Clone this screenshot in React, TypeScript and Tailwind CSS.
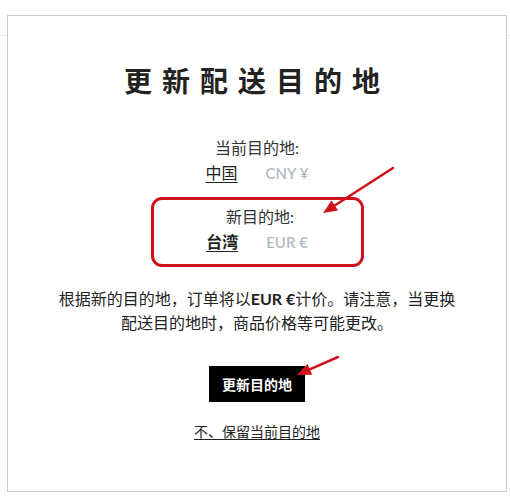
const cjk = "font-['Lato','Noto_Sans_CJK_SC',sans-serif]";

function Arrow({ x1, y1, x2, y2 }: { x1: number; y1: number; x2: number; y2: number }) {
  const a = Math.atan2(y2 - y1, x2 - x1);
  const len = 14;
  const w = 6;
  const bx = x2 - len * Math.cos(a);
  const by = y2 - len * Math.sin(a);
  const px = -Math.sin(a) * w;
  const py = Math.cos(a) * w;
  return (
    <g>
      <line x1={x1} y1={y1} x2={bx} y2={by} stroke="#d0111b" strokeWidth={2.5} strokeLinecap="round" />
      <polygon points={`${x2},${y2} ${bx + px},${by + py} ${bx - px},${by - py}`} fill="#d0111b" />
    </g>
  );
}

export default function App() {
  return (
    <div className={`relative h-[503px] w-[510px] overflow-hidden bg-white text-[#222] ${cjk}`}>
      <div className="absolute left-0 right-0 top-[35px] h-px bg-[#e6e6e6]" />
      <div className="relative ml-[7px] mt-[15px] flex h-[477px] w-[500px] flex-col items-center border border-[#cccccc] bg-white">
        <h1 className="mt-[47px] text-[28px] font-bold leading-[36px] tracking-[10px] text-[#222]">
          更新配送目的地
        </h1>

        <div className="mt-[38px] flex flex-col items-center text-[16px] leading-[22px]">
          <div className="text-[#333]">当前目的地:</div>
          <div className="mt-[3px] flex items-baseline gap-[28px]">
            <span className="text-[#222] underline underline-offset-[3px]">中国</span>
            <span className="text-[15px] font-medium text-[#aeb6bf]">CNY ¥</span>
          </div>
        </div>

        <div className="mt-[13px] flex h-[70px] w-[213px] flex-col items-center rounded-[11px] border-[3px] border-[#d0111b] pt-[6px] text-[16px] leading-[22px]">
          <div className="ml-[6px] text-[#333]">新目的地:</div>
          <div className="mt-[3px] flex items-baseline gap-[28px]">
            <span className="font-bold text-[#222] underline underline-offset-[3px]">台湾</span>
            <span className="text-[15px] font-medium text-[#aeb6bf]">EUR €</span>
          </div>
        </div>

        <p className="mt-[20px] text-center text-[16px] leading-[24px] text-[#222]">
          根据新的目的地，订单将以<b className="font-bold">EUR €</b>计价。请注意，当更换
          <br />
          配送目的地时，商品价格等可能更改。
        </p>

        <button
          type="button"
          className="mt-[31px] h-[36px] w-[96px] bg-black text-[14px] font-bold text-white"
        >
          更新目的地
        </button>

        <a href="#" className="mt-[20px] text-[14px] leading-[20px] text-[#222] underline underline-offset-[2px]">
          不、保留当前目的地
        </a>
      </div>

      <svg className="pointer-events-none absolute left-0 top-0" width={510} height={503}>
        <Arrow x1={393} y1={168} x2={323} y2={213} />
        <Arrow x1={338} y1={357} x2={297} y2={375} />
      </svg>
    </div>
  );
}
